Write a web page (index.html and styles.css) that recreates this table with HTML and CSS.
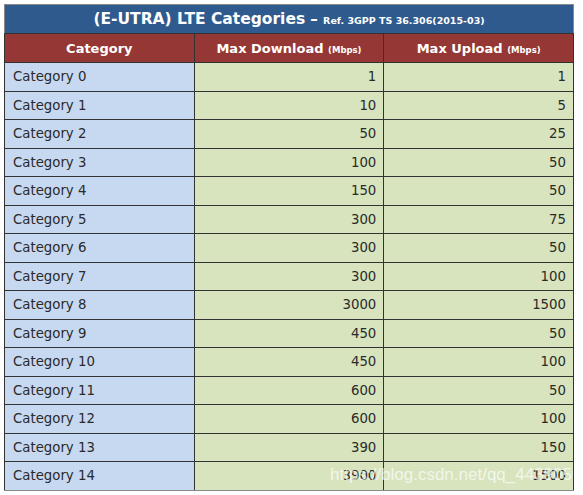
FILE: index.html
```html
<!DOCTYPE html>
<html>
<head>
<meta charset="utf-8">
<link rel="stylesheet" href="styles.css">
</head>
<body>
<div class="wrap">
<table class="lte">
  <thead>
    <tr class="title-row"><th colspan="3"><span class="big">(E-UTRA) LTE Categories</span> – <span class="small">Ref. 3GPP TS 36.306(2015-03)</span></th></tr>
    <tr class="head-row">
      <th class="c1">Category</th>
      <th class="c2">Max Download <span class="unit">(Mbps)</span></th>
      <th class="c3">Max Upload <span class="unit">(Mbps)</span></th>
    </tr>
  </thead>
  <tbody>
    <tr><td class="cat">Category 0</td><td class="num">1</td><td class="num">1</td></tr>
    <tr><td class="cat">Category 1</td><td class="num">10</td><td class="num">5</td></tr>
    <tr><td class="cat">Category 2</td><td class="num">50</td><td class="num">25</td></tr>
    <tr><td class="cat">Category 3</td><td class="num">100</td><td class="num">50</td></tr>
    <tr><td class="cat">Category 4</td><td class="num">150</td><td class="num">50</td></tr>
    <tr><td class="cat">Category 5</td><td class="num">300</td><td class="num">75</td></tr>
    <tr><td class="cat">Category 6</td><td class="num">300</td><td class="num">50</td></tr>
    <tr><td class="cat">Category 7</td><td class="num">300</td><td class="num">100</td></tr>
    <tr><td class="cat">Category 8</td><td class="num">3000</td><td class="num">1500</td></tr>
    <tr><td class="cat">Category 9</td><td class="num">450</td><td class="num">50</td></tr>
    <tr><td class="cat">Category 10</td><td class="num">450</td><td class="num">100</td></tr>
    <tr><td class="cat">Category 11</td><td class="num">600</td><td class="num">50</td></tr>
    <tr><td class="cat">Category 12</td><td class="num">600</td><td class="num">100</td></tr>
    <tr><td class="cat">Category 13</td><td class="num">390</td><td class="num">150</td></tr>
    <tr><td class="cat">Category 14</td><td class="num">3900</td><td class="num">1500</td></tr>
  </tbody>
</table>
<div class="watermark">https://blog.csdn.net/qq_4439050</div>
</div>
</body>
</html>
```
FILE: styles.css
```css
html, body {
  margin: 0;
  padding: 0;
  background: #ffffff;
}
.wrap {
  position: relative;
  padding: 4px 0 0 4px;
  width: 570px;
}
.lte {
  border-collapse: collapse;
  width: 570px;
  table-layout: fixed;
  font-family: "DejaVu Sans", sans-serif;
  font-size: 13.3px;
  color: #2a2a2a;
  border: 1.5px solid #8a8a8a;
}
.lte th, .lte td {
  padding: 0;
  box-sizing: border-box;
}
.title-row th {
  background: #2f5a8e;
  color: #ffffff;
  height: 29px;
  font-weight: bold;
  font-size: 15px;
  text-align: center;
  border-bottom: 1px solid #333;
}
.title-row .big {
  font-size: 15.5px;
}
.title-row .small {
  font-size: 9.5px;
}
.head-row th {
  background: #953735;
  color: #ffffff;
  height: 29px;
  font-size: 13px;
  font-weight: bold;
  text-align: center;
  border: 1px solid #333;
  border-top: none;
}
.head-row .unit {
  font-size: 8.5px;
}
.head-row .c1 { width: 190px; }
.head-row .c2 { width: 190px; }
.lte tbody td {
  height: 28.5px;
  border: 1px solid #333;
}
.lte td.cat {
  background: #c6d9f1;
  padding-left: 8px;
  text-align: left;
}
.lte td.num {
  background: #d7e4bd;
  text-align: right;
  padding-right: 7px;
}
.lte tr:last-child td {
  border-bottom: 1.5px solid #8a8a8a;
}
.watermark {
  position: absolute;
  left: 330px;
  top: 465px;
  width: 243px;
  overflow: hidden;
  white-space: nowrap;
  font-family: "Liberation Sans", sans-serif;
  font-size: 17px;
  color: rgba(255, 255, 255, 0.7);
}
```
